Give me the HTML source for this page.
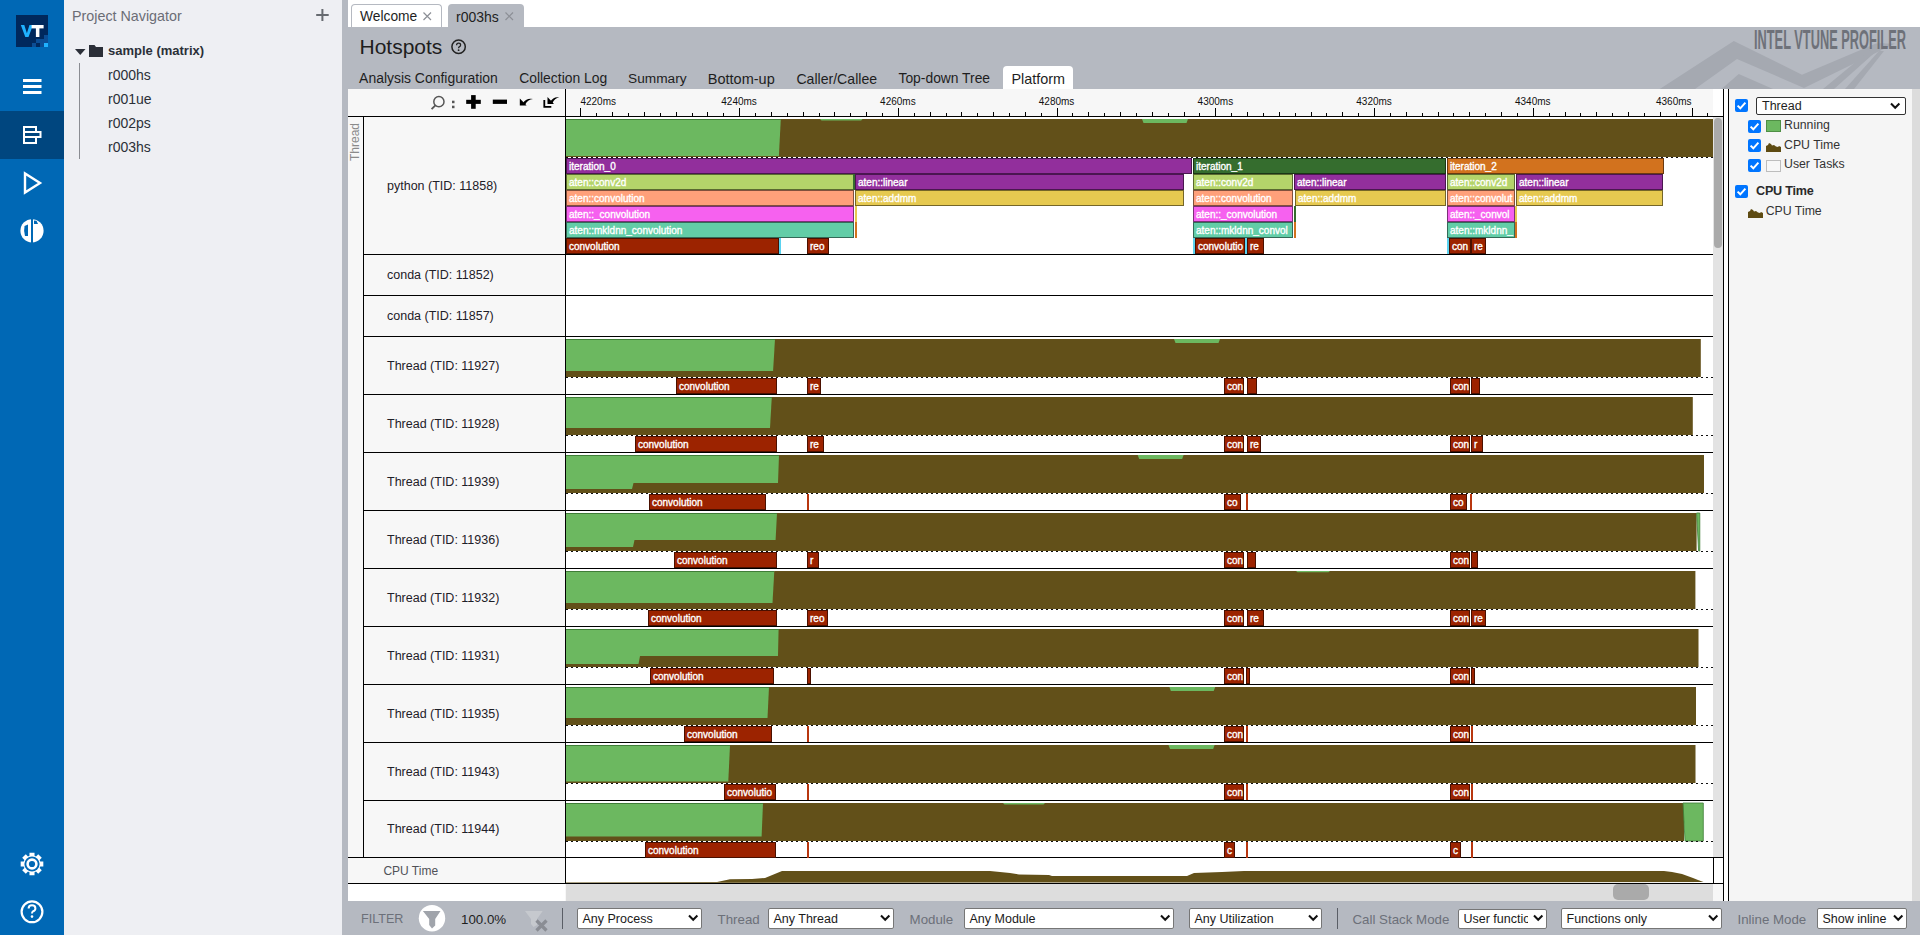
<!DOCTYPE html><html><head><meta charset="utf-8"><style>
html,body{margin:0;padding:0;width:1920px;height:935px;overflow:hidden;background:#fff;font-family:"Liberation Sans", sans-serif;}
.tb{position:absolute;overflow:hidden;box-sizing:border-box;border:1px solid;color:#fff;font-size:10px;line-height:16px;padding-left:2px;white-space:nowrap;-webkit-text-stroke:0.35px #fff;}
.sel{position:absolute;box-sizing:border-box;background:#fff;border:1px solid #767676;border-radius:2px;font-size:12.5px;color:#1a1a1a;white-space:nowrap;overflow:hidden;}
.cb{position:absolute;width:13px;height:13px;border-radius:2px;background:#0075ff;}
</style></head><body>
<div style="position:absolute;left:0px;top:0px;width:64px;height:935px;background:#0068b5"></div>
<div style="position:absolute;left:0px;top:111px;width:64px;height:48px;background:#00467f"></div>
<svg style="position:absolute;left:0;top:0" width="64" height="935"><rect x="16" y="15" width="32" height="32" fill="#00285c"/><polygon points="20.8,25 24.3,25 26.9,33.2 29.5,25 33,25 28.5,37 25.3,37" fill="#1fb2ff"/><rect x="31.6" y="25" width="12" height="3.4" fill="#fff"/><rect x="35.9" y="28" width="3.5" height="9" fill="#fff"/><rect x="44" y="35" width="4" height="8" fill="#0b4d94"/><rect x="36" y="39" width="8" height="4" fill="#0b4d94"/><rect x="32" y="43" width="4" height="4" fill="#0b4d94"/><rect x="40" y="43" width="4" height="4" fill="#0b4d94"/><rect x="44" y="43" width="4" height="4" fill="#1fb2ff"/><rect x="23" y="79" width="18.5" height="3" fill="#fff"/><rect x="23" y="85" width="18.5" height="3" fill="#fff"/><rect x="23" y="91" width="18.5" height="3" fill="#fff"/><g fill="none" stroke="#fff" stroke-width="2"><rect x="24" y="127" width="12" height="5"/><rect x="24" y="132" width="16.5" height="5"/><rect x="24" y="137" width="12" height="6"/></g><polygon points="25,173.5 25,192.5 40,183" fill="none" stroke="#fff" stroke-width="2.4" stroke-linejoin="miter"/><circle cx="32" cy="230.8" r="11.6" fill="#fff"/><rect x="31" y="218" width="2" height="26" fill="#0068b5"/><path d="M24.5,226 Q23.5,231 25,236 L28,236 L28,224.5 Z" fill="#0068b5"/><path d="M34,220.5 L36.5,220.8 L38,224 L34,224 Z" fill="#0068b5"/><polygon points="43.32,861.47 43.32,866.53 40.22,866.54 39.61,868.01 41.79,870.21 38.21,873.79 36.01,871.61 34.54,872.22 34.53,875.32 29.47,875.32 29.46,872.22 27.99,871.61 25.79,873.79 22.21,870.21 24.39,868.01 23.78,866.54 20.68,866.53 20.68,861.47 23.78,861.46 24.39,859.99 22.21,857.79 25.79,854.21 27.99,856.39 29.46,855.78 29.47,852.68 34.53,852.68 34.54,855.78 36.01,856.39 38.21,854.21 41.79,857.79 39.61,859.99 40.22,861.46" fill="#fff"/><circle cx="32" cy="864" r="7.6" fill="#0068b5"/><circle cx="32" cy="864" r="5.7" fill="#fff"/><circle cx="32" cy="864" r="3.1" fill="#0068b5"/><circle cx="32" cy="911.8" r="10.4" fill="none" stroke="#fff" stroke-width="2.2"/><path d="M28.6,908.6 Q28.6,905.3 32,905.3 Q35.4,905.3 35.4,908.4 Q35.4,910.4 33,911.3 Q32,911.8 32,913.6" fill="none" stroke="#fff" stroke-width="2"/><circle cx="32" cy="916.6" r="1.3" fill="#fff"/></svg>
<div style="position:absolute;left:64px;top:0px;width:278px;height:935px;background:#eeeff3"></div>
<div style="position:absolute;left:72px;top:8.86px;font-size:14.3px;line-height:14.3px;height:14.3px;color:#6b6d76;font-weight:400;white-space:nowrap;">Project Navigator</div>
<svg style="position:absolute;left:300px;top:0" width="40" height="40"><rect x="21.4" y="9" width="2" height="12" fill="#666a70"/><rect x="16.2" y="14" width="12.5" height="2" fill="#666a70"/></svg>
<svg style="position:absolute;left:70px;top:40px" width="40" height="20"><polygon points="5,9 15.5,9 10.25,15" fill="#2b2f38"/><path d="M19,5 L24.5,5 L26,7 L33,7 L33,17 L19,17 Z" fill="#2b2f38"/></svg>
<div style="position:absolute;left:108px;top:44.00px;font-size:13px;line-height:13px;height:13px;color:#2b2f38;font-weight:700;white-space:nowrap;">sample (matrix)</div>
<div style="position:absolute;left:108px;top:68.40px;font-size:14px;line-height:14px;height:14px;color:#2b2f38;font-weight:400;white-space:nowrap;">r000hs</div>
<div style="position:absolute;left:108px;top:92.40px;font-size:14px;line-height:14px;height:14px;color:#2b2f38;font-weight:400;white-space:nowrap;">r001ue</div>
<div style="position:absolute;left:108px;top:116.40px;font-size:14px;line-height:14px;height:14px;color:#2b2f38;font-weight:400;white-space:nowrap;">r002ps</div>
<div style="position:absolute;left:108px;top:140.40px;font-size:14px;line-height:14px;height:14px;color:#2b2f38;font-weight:400;white-space:nowrap;">r003hs</div>
<div style="position:absolute;left:79px;top:63px;width:1px;height:96px;background:#8a8c92"></div>
<div style="position:absolute;left:342px;top:0px;width:6px;height:935px;background:#b5b9c1"></div>
<div style="position:absolute;left:348px;top:0px;width:1572px;height:27px;background:#fff"></div>
<div style="position:absolute;left:351px;top:4px;width:91px;height:24px;background:#fff;border:1px solid #b5b9c1;border-bottom:none;border-radius:4px 4px 0 0;box-sizing:border-box"></div>
<div style="position:absolute;left:360px;top:9.76px;font-size:13.8px;line-height:13.8px;height:13.8px;color:#1e1e1e;font-weight:400;white-space:nowrap;">Welcome</div>
<div style="position:absolute;left:448px;top:4px;width:76px;height:23px;background:#b5b9c1;border-radius:4px 4px 0 0"></div>
<div style="position:absolute;left:456px;top:9.60px;font-size:14px;line-height:14px;height:14px;color:#1e1e1e;font-weight:400;white-space:nowrap;">r003hs</div>
<svg style="position:absolute;left:423.2px;top:12px" width="9" height="9"><path d="M0.5,0.5 L8,8 M8,0.5 L0.5,8" stroke="#8c8f96" stroke-width="1.2"/></svg>
<svg style="position:absolute;left:505.4px;top:12px" width="9" height="9"><path d="M0.5,0.5 L8,8 M8,0.5 L0.5,8" stroke="#8c8f96" stroke-width="1.2"/></svg>
<div style="position:absolute;left:348px;top:27px;width:1572px;height:62px;background:#b5b9c1"></div>
<svg style="position:absolute;left:1600px;top:27px" width="320" height="62"><polygon points="59.8,62 133.8,14 202,47.7 276,16.4 295,16.4 204,61 137,32 95,62" fill="#a5a9b1"/><polygon points="121.6,62 138.75,47 173,62" fill="#a5a9b1"/><polygon points="223,62 278,16.4 285,16.4 234,62" fill="#a5a9b1"/><polygon points="245,62 279,24 284,24 254,62" fill="#a5a9b1"/></svg>
<div style="position:absolute;left:1754px;top:25px;height:30px;font-size:27px;line-height:30px;font-weight:700;color:#6e7179;white-space:nowrap;transform:scaleX(0.474);transform-origin:0 0;letter-spacing:0px">INTEL VTUNE PROFILER</div>
<div style="position:absolute;left:359.5px;top:36.20px;font-size:21px;line-height:21px;height:21px;color:#1e1e1e;font-weight:400;white-space:nowrap;">Hotspots</div>
<svg style="position:absolute;left:450px;top:38px" width="18" height="18"><circle cx="8.6" cy="8.7" r="6.7" fill="none" stroke="#222" stroke-width="1.5"/><path d="M6.6,7.2 Q6.6,5.2 8.6,5.2 Q10.6,5.2 10.6,7 Q10.6,8.2 9.2,8.8 Q8.6,9.1 8.6,10.3" fill="none" stroke="#222" stroke-width="1.3"/><circle cx="8.6" cy="12.2" r="0.9" fill="#222"/></svg>
<div style="position:absolute;left:1003px;top:66px;width:70px;height:23px;background:#fff;border-radius:4px 4px 0 0"></div>
<div style="position:absolute;left:359.1px;top:72.04px;font-size:13.95px;line-height:13.95px;height:13.95px;color:#1e1e1e;font-weight:400;white-space:nowrap;">Analysis Configuration</div>
<div style="position:absolute;left:519.2px;top:72.08px;font-size:13.9px;line-height:13.9px;height:13.9px;color:#1e1e1e;font-weight:400;white-space:nowrap;">Collection Log</div>
<div style="position:absolute;left:628.0px;top:72.24px;font-size:13.7px;line-height:13.7px;height:13.7px;color:#1e1e1e;font-weight:400;white-space:nowrap;">Summary</div>
<div style="position:absolute;left:707.8px;top:71.60px;font-size:14.5px;line-height:14.5px;height:14.5px;color:#1e1e1e;font-weight:400;white-space:nowrap;">Bottom-up</div>
<div style="position:absolute;left:796.4px;top:71.92px;font-size:14.1px;line-height:14.1px;height:14.1px;color:#1e1e1e;font-weight:400;white-space:nowrap;">Caller/Callee</div>
<div style="position:absolute;left:898.5px;top:72.12px;font-size:13.85px;line-height:13.85px;height:13.85px;color:#1e1e1e;font-weight:400;white-space:nowrap;">Top-down Tree</div>
<div style="position:absolute;left:1011.5px;top:71.68px;font-size:14.4px;line-height:14.4px;height:14.4px;color:#1e1e1e;font-weight:400;white-space:nowrap;">Platform</div>
<div style="position:absolute;left:348px;top:89px;width:1375px;height:812px;background:#f7f7f7"></div>
<div style="position:absolute;left:566px;top:117px;width:1147px;height:740px;background:#fff"></div>
<div style="position:absolute;left:566px;top:857px;width:1147px;height:26px;background:#fff"></div>
<div style="position:absolute;left:348px;top:884px;width:217px;height:17px;background:#fff"></div>
<div style="position:absolute;left:566px;top:884px;width:1147px;height:17px;background:#dddddd"></div>
<div style="position:absolute;left:1613px;top:884px;width:36px;height:16px;background:#aaaaaa;border-radius:5px"></div>
<div style="position:absolute;left:1713px;top:117px;width:10px;height:740px;background:#e3e3e3"></div>
<div style="position:absolute;left:1714px;top:118px;width:8px;height:130px;background:#aaaaaa;border-radius:4px"></div>
<div style="position:absolute;left:1713px;top:89px;width:10px;height:27px;background:#fff"></div>
<div style="position:absolute;left:1723px;top:89px;width:1px;height:812px;background:#000"></div>
<div style="position:absolute;left:1724px;top:89px;width:4px;height:812px;background:#fff"></div>
<div style="position:absolute;left:1728px;top:89px;width:1px;height:812px;background:#000"></div>
<div style="position:absolute;left:1729px;top:89px;width:183px;height:812px;background:#f5f5f5"></div>
<div style="position:absolute;left:1912px;top:89px;width:8px;height:812px;background:#dcdcdc"></div>
<svg style="position:absolute;left:0;top:0" width="1920" height="935" shape-rendering="crispEdges"><rect x="348" y="116" width="1375" height="1" fill="#000" /><rect x="565" y="89" width="1" height="795" fill="#000" /><rect x="580" y="108" width="1" height="8" fill="#000" /><rect x="596" y="113" width="1" height="3" fill="#000" /><rect x="612" y="112" width="1" height="4" fill="#000" /><rect x="628" y="113" width="1" height="3" fill="#000" /><rect x="644" y="112" width="1" height="4" fill="#000" /><rect x="660" y="113" width="1" height="3" fill="#000" /><rect x="676" y="112" width="1" height="4" fill="#000" /><rect x="692" y="113" width="1" height="3" fill="#000" /><rect x="707" y="112" width="1" height="4" fill="#000" /><rect x="723" y="113" width="1" height="3" fill="#000" /><rect x="739" y="108" width="1" height="8" fill="#000" /><rect x="755" y="113" width="1" height="3" fill="#000" /><rect x="771" y="112" width="1" height="4" fill="#000" /><rect x="787" y="113" width="1" height="3" fill="#000" /><rect x="803" y="112" width="1" height="4" fill="#000" /><rect x="819" y="113" width="1" height="3" fill="#000" /><rect x="834" y="112" width="1" height="4" fill="#000" /><rect x="850" y="113" width="1" height="3" fill="#000" /><rect x="866" y="112" width="1" height="4" fill="#000" /><rect x="882" y="113" width="1" height="3" fill="#000" /><rect x="898" y="108" width="1" height="8" fill="#000" /><rect x="914" y="113" width="1" height="3" fill="#000" /><rect x="930" y="112" width="1" height="4" fill="#000" /><rect x="946" y="113" width="1" height="3" fill="#000" /><rect x="961" y="112" width="1" height="4" fill="#000" /><rect x="977" y="113" width="1" height="3" fill="#000" /><rect x="993" y="112" width="1" height="4" fill="#000" /><rect x="1009" y="113" width="1" height="3" fill="#000" /><rect x="1025" y="112" width="1" height="4" fill="#000" /><rect x="1041" y="113" width="1" height="3" fill="#000" /><rect x="1057" y="108" width="1" height="8" fill="#000" /><rect x="1072" y="113" width="1" height="3" fill="#000" /><rect x="1088" y="112" width="1" height="4" fill="#000" /><rect x="1104" y="113" width="1" height="3" fill="#000" /><rect x="1120" y="112" width="1" height="4" fill="#000" /><rect x="1136" y="113" width="1" height="3" fill="#000" /><rect x="1152" y="112" width="1" height="4" fill="#000" /><rect x="1168" y="113" width="1" height="3" fill="#000" /><rect x="1184" y="112" width="1" height="4" fill="#000" /><rect x="1199" y="113" width="1" height="3" fill="#000" /><rect x="1215" y="108" width="1" height="8" fill="#000" /><rect x="1231" y="113" width="1" height="3" fill="#000" /><rect x="1247" y="112" width="1" height="4" fill="#000" /><rect x="1263" y="113" width="1" height="3" fill="#000" /><rect x="1279" y="112" width="1" height="4" fill="#000" /><rect x="1295" y="113" width="1" height="3" fill="#000" /><rect x="1311" y="112" width="1" height="4" fill="#000" /><rect x="1326" y="113" width="1" height="3" fill="#000" /><rect x="1342" y="112" width="1" height="4" fill="#000" /><rect x="1358" y="113" width="1" height="3" fill="#000" /><rect x="1374" y="108" width="1" height="8" fill="#000" /><rect x="1390" y="113" width="1" height="3" fill="#000" /><rect x="1406" y="112" width="1" height="4" fill="#000" /><rect x="1422" y="113" width="1" height="3" fill="#000" /><rect x="1438" y="112" width="1" height="4" fill="#000" /><rect x="1453" y="113" width="1" height="3" fill="#000" /><rect x="1469" y="112" width="1" height="4" fill="#000" /><rect x="1485" y="113" width="1" height="3" fill="#000" /><rect x="1501" y="112" width="1" height="4" fill="#000" /><rect x="1517" y="113" width="1" height="3" fill="#000" /><rect x="1533" y="108" width="1" height="8" fill="#000" /><rect x="1549" y="113" width="1" height="3" fill="#000" /><rect x="1565" y="112" width="1" height="4" fill="#000" /><rect x="1580" y="113" width="1" height="3" fill="#000" /><rect x="1596" y="112" width="1" height="4" fill="#000" /><rect x="1612" y="113" width="1" height="3" fill="#000" /><rect x="1628" y="112" width="1" height="4" fill="#000" /><rect x="1644" y="113" width="1" height="3" fill="#000" /><rect x="1660" y="112" width="1" height="4" fill="#000" /><rect x="1676" y="113" width="1" height="3" fill="#000" /><rect x="1692" y="108" width="1" height="8" fill="#000" /><rect x="1707" y="113" width="1" height="3" fill="#000" /></svg>
<svg style="position:absolute;left:425px;top:90px;z-index:2" width="140" height="25">
<circle cx="13.9" cy="11.7" r="5.1" fill="none" stroke="#555" stroke-width="1.5"/>
<path d="M10.4,15.3 L6.6,19.2" stroke="#555" stroke-width="1.8"/>
<rect x="27" y="10.7" width="2.5" height="2.5" fill="#555"/><rect x="27" y="15.7" width="2.5" height="2.5" fill="#555"/>
<rect x="46.1" y="5.1" width="4.6" height="13.7" fill="#000"/><rect x="41.2" y="9.8" width="14.6" height="4.1" fill="#000"/>
<rect x="67.8" y="9.6" width="14.2" height="4.3" fill="#000"/>
<path d="M94.8,8.4 L94.8,15.6 L101.6,15.6 Z" fill="#000"/>
<path d="M97.5,13.5 Q101,7.8 108,9 Q102.5,9.5 100,15 Z" fill="#000"/>
<path d="M119.3,10 L119.3,16.9 L126.3,16.9" fill="none" stroke="#000" stroke-width="1.8"/>
<path d="M122.5,7 L122.5,14 L129,14 Z" fill="#000"/>
<path d="M125,12 Q128.5,6.3 134.3,7.5 Q129.5,8 127.3,13.5 Z" fill="#000"/>
</svg>
<div style="position:absolute;left:580.4px;top:96.90px;font-size:10px;line-height:10px;height:10px;color:#111;font-weight:400;white-space:nowrap;">4220ms</div>
<div style="position:absolute;left:721.3px;top:96.90px;font-size:10px;line-height:10px;height:10px;color:#111;font-weight:400;white-space:nowrap;">4240ms</div>
<div style="position:absolute;left:880.1px;top:96.90px;font-size:10px;line-height:10px;height:10px;color:#111;font-weight:400;white-space:nowrap;">4260ms</div>
<div style="position:absolute;left:1038.8px;top:96.90px;font-size:10px;line-height:10px;height:10px;color:#111;font-weight:400;white-space:nowrap;">4280ms</div>
<div style="position:absolute;left:1197.6px;top:96.90px;font-size:10px;line-height:10px;height:10px;color:#111;font-weight:400;white-space:nowrap;">4300ms</div>
<div style="position:absolute;left:1356.3px;top:96.90px;font-size:10px;line-height:10px;height:10px;color:#111;font-weight:400;white-space:nowrap;">4320ms</div>
<div style="position:absolute;left:1515.0px;top:96.90px;font-size:10px;line-height:10px;height:10px;color:#111;font-weight:400;white-space:nowrap;">4340ms</div>
<div style="position:absolute;left:1656.0px;top:96.90px;font-size:10px;line-height:10px;height:10px;color:#111;font-weight:400;white-space:nowrap;">4360ms</div>
<svg style="position:absolute;left:0;top:0" width="1920" height="935" shape-rendering="crispEdges"><rect x="363" y="116" width="1" height="741" fill="#000" /><rect x="363" y="254" width="1350" height="1" fill="#000" /><rect x="363" y="295" width="1350" height="1" fill="#000" /><rect x="363" y="336" width="1350" height="1" fill="#000" /><rect x="363" y="394" width="1350" height="1" fill="#000" /><rect x="363" y="452" width="1350" height="1" fill="#000" /><rect x="363" y="510" width="1350" height="1" fill="#000" /><rect x="363" y="568" width="1350" height="1" fill="#000" /><rect x="363" y="626" width="1350" height="1" fill="#000" /><rect x="363" y="684" width="1350" height="1" fill="#000" /><rect x="363" y="742" width="1350" height="1" fill="#000" /><rect x="363" y="800" width="1350" height="1" fill="#000" /><rect x="348" y="857" width="1365" height="1" fill="#000" /><rect x="348" y="883" width="1375" height="1" fill="#000" /><rect x="1713" y="857" width="10" height="26" fill="#fff" stroke="#000" stroke-width="1"/><polygon points="566,119 1713,119 1713,157 566,157" fill="#625019" shape-rendering="geometricPrecision"/><polygon points="566,119 780.8,119 778.9,156 566,156" fill="#6cb860" shape-rendering="geometricPrecision"/><rect x="566" y="119" width="215" height="1" fill="#3f7d37" /><polygon points="820,119 862.6,119 861.1,120.6 821.5,120.6" fill="#6cb860" shape-rendering="geometricPrecision"/><polygon points="1142,119 1188,119 1186.5,123 1143.5,123" fill="#6cb860" shape-rendering="geometricPrecision"/><line x1="566" y1="157.5" x2="1713" y2="157.5" stroke="#111" stroke-width="1" stroke-dasharray="2,3"/><polygon points="566,339 1700.8,339 1700.8,377 566,377" fill="#625019" shape-rendering="geometricPrecision"/><polygon points="566,339 775,339 773.1,371 566,371" fill="#6cb860" shape-rendering="geometricPrecision"/><rect x="566" y="339" width="209" height="1" fill="#3f7d37" /><polygon points="1174,339 1220,339 1218.5,343 1175.5,343" fill="#6cb860" shape-rendering="geometricPrecision"/><line x1="566" y1="377.5" x2="1713" y2="377.5" stroke="#111" stroke-width="1" stroke-dasharray="2,3"/><polygon points="566,397 1692.8,397 1692.8,435 566,435" fill="#625019" shape-rendering="geometricPrecision"/><polygon points="566,397 771.8,397 770,428 566,428" fill="#6cb860" shape-rendering="geometricPrecision"/><rect x="566" y="397" width="206" height="1" fill="#3f7d37" /><line x1="566" y1="435.5" x2="1713" y2="435.5" stroke="#111" stroke-width="1" stroke-dasharray="2,3"/><polygon points="566,455 1704,455 1704,493 566,493" fill="#625019" shape-rendering="geometricPrecision"/><polygon points="566,455 779,455 778,483 633.5,483 632,489 566,489" fill="#6cb860" shape-rendering="geometricPrecision"/><rect x="566" y="455" width="213" height="1" fill="#3f7d37" /><polygon points="1137.7,455 1183.6,455 1182.1,459 1139.2,459" fill="#6cb860" shape-rendering="geometricPrecision"/><line x1="566" y1="493.5" x2="1713" y2="493.5" stroke="#111" stroke-width="1" stroke-dasharray="2,3"/><polygon points="566,513 1696.6,513 1696.6,551 566,551" fill="#625019" shape-rendering="geometricPrecision"/><polygon points="566,513 777,513 775.6,540 634.5,540 633,547 566,547" fill="#6cb860" shape-rendering="geometricPrecision"/><rect x="566" y="513" width="211" height="1" fill="#3f7d37" /><polygon points="1696.6,513 1699.8,513 1699.8,551 1698.6,551" fill="#6cb860" stroke="#3f7d37" stroke-width="0.8" shape-rendering="geometricPrecision"/><line x1="566" y1="551.5" x2="1713" y2="551.5" stroke="#111" stroke-width="1" stroke-dasharray="2,3"/><polygon points="566,571 1695.4,571 1695.4,609 566,609" fill="#625019" shape-rendering="geometricPrecision"/><polygon points="566,571 774.3,571 772.5,603 566,603" fill="#6cb860" shape-rendering="geometricPrecision"/><rect x="566" y="571" width="208" height="1" fill="#3f7d37" /><polygon points="1296,571 1330,571 1328.5,572.2 1297.5,572.2" fill="#6cb860" shape-rendering="geometricPrecision"/><line x1="566" y1="609.5" x2="1713" y2="609.5" stroke="#111" stroke-width="1" stroke-dasharray="2,3"/><polygon points="566,629 1698.5,629 1698.5,667 566,667" fill="#625019" shape-rendering="geometricPrecision"/><polygon points="566,629 778.6,629 778,656 640.0,656 638.5,664 566,664" fill="#6cb860" shape-rendering="geometricPrecision"/><rect x="566" y="629" width="213" height="1" fill="#3f7d37" /><line x1="566" y1="667.5" x2="1713" y2="667.5" stroke="#111" stroke-width="1" stroke-dasharray="2,3"/><polygon points="566,687 1696,687 1696,725 566,725" fill="#625019" shape-rendering="geometricPrecision"/><polygon points="566,687 769,687 767.5,718 566,718" fill="#6cb860" shape-rendering="geometricPrecision"/><rect x="566" y="687" width="203" height="1" fill="#3f7d37" /><polygon points="1169.4,687 1215.2,687 1213.7,691 1170.9,691" fill="#6cb860" shape-rendering="geometricPrecision"/><line x1="566" y1="725.5" x2="1713" y2="725.5" stroke="#111" stroke-width="1" stroke-dasharray="2,3"/><polygon points="566,745 1695.5,745 1695.5,783 566,783" fill="#625019" shape-rendering="geometricPrecision"/><polygon points="566,745 730,745 728.3,781.5 566,781.5" fill="#6cb860" shape-rendering="geometricPrecision"/><rect x="566" y="745" width="164" height="1" fill="#3f7d37" /><polygon points="1168.5,745 1214.6,745 1213.1,749 1170.0,749" fill="#6cb860" shape-rendering="geometricPrecision"/><line x1="566" y1="783.5" x2="1713" y2="783.5" stroke="#111" stroke-width="1" stroke-dasharray="2,3"/><polygon points="566,803 1684,803 1684,841 566,841" fill="#625019" shape-rendering="geometricPrecision"/><polygon points="566,803 763,803 761.6,836.5 566,836.5" fill="#6cb860" shape-rendering="geometricPrecision"/><rect x="566" y="803" width="197" height="1" fill="#3f7d37" /><polygon points="1003,803 1045,803 1043.5,804.5 1004.5,804.5" fill="#6cb860" shape-rendering="geometricPrecision"/><polygon points="1683,803 1703.3,803 1703.3,841 1685,841" fill="#6cb860" stroke="#3f7d37" stroke-width="0.8" shape-rendering="geometricPrecision"/><line x1="566" y1="841.5" x2="1713" y2="841.5" stroke="#111" stroke-width="1" stroke-dasharray="2,3"/><polygon points="566,882.5 717,882 730,879.3 752,879 765,878 782,871.1 990,871.1 1010,873 1019,874.5 1049,875 1052,876 1187,876 1194,873 1222,872 1244,871 1664,871 1672,872 1682,874 1693,878 1698,880 1703.5,882 1713,882 566,883" fill="#625019" shape-rendering="geometricPrecision"/></svg>
<div class="tb" style="left:566px;top:158px;width:626px;height:16px;background:#922f9c;border-color:#4a1650">iteration_0</div>
<div class="tb" style="left:1193px;top:158px;width:253px;height:16px;background:#356d2e;border-color:#1a3616">iteration_1</div>
<div class="tb" style="left:1447px;top:158px;width:217px;height:16px;background:#d2721e;border-color:#6a3a10">iteration_2</div>
<div class="tb" style="left:566px;top:174px;width:288px;height:16px;background:#b4d46a;border-color:#5a6a30">aten::conv2d</div>
<div style="position:absolute;left:853px;top:174px;width:1.5px;height:16px;background:#356d2e"></div>
<div class="tb" style="left:855px;top:174px;width:329px;height:16px;background:#922f9c;border-color:#4a1650">aten::linear</div>
<div class="tb" style="left:1193px;top:174px;width:100px;height:16px;background:#b4d46a;border-color:#5a6a30">aten::conv2d</div>
<div class="tb" style="left:1294px;top:174px;width:152px;height:16px;background:#922f9c;border-color:#4a1650">aten::linear</div>
<div class="tb" style="left:1447px;top:174px;width:68px;height:16px;background:#b4d46a;border-color:#5a6a30">aten::conv2d</div>
<div class="tb" style="left:1516px;top:174px;width:147px;height:16px;background:#922f9c;border-color:#4a1650">aten::linear</div>
<div class="tb" style="left:566px;top:190px;width:288px;height:16px;background:#fea07a;border-color:#80503c">aten::convolution</div>
<div class="tb" style="left:855px;top:190px;width:329px;height:16px;background:#e6c950;border-color:#756628">aten::addmm</div>
<div class="tb" style="left:1193px;top:190px;width:100px;height:16px;background:#fea07a;border-color:#80503c">aten::convolution</div>
<div class="tb" style="left:1295px;top:190px;width:151px;height:16px;background:#e6c950;border-color:#756628">aten::addmm</div>
<div class="tb" style="left:1447px;top:190px;width:68px;height:16px;background:#fea07a;border-color:#80503c">aten::convolut</div>
<div class="tb" style="left:1516px;top:190px;width:147px;height:16px;background:#e6c950;border-color:#756628">aten::addmm</div>
<div class="tb" style="left:566px;top:206px;width:288px;height:16px;background:#f661ef;border-color:#7a3076">aten::_convolution</div>
<div style="position:absolute;left:855px;top:206px;width:1.5px;height:16px;background:#e6c950"></div>
<div class="tb" style="left:1193px;top:206px;width:100px;height:16px;background:#f661ef;border-color:#7a3076">aten::_convolution</div>
<div style="position:absolute;left:1294px;top:206px;width:2px;height:16px;background:#356d2e"></div>
<div class="tb" style="left:1447px;top:206px;width:68px;height:16px;background:#f661ef;border-color:#7a3076">aten::_convol</div>
<div style="position:absolute;left:1515px;top:206px;width:1.5px;height:16px;background:#e6c950"></div>
<div class="tb" style="left:566px;top:222px;width:288px;height:16px;background:#62cda7;border-color:#346a58">aten::mkldnn_convolution</div>
<div style="position:absolute;left:855px;top:222px;width:2px;height:16px;background:#d2721e"></div>
<div class="tb" style="left:1193px;top:222px;width:100px;height:16px;background:#62cda7;border-color:#346a58">aten::mkldnn_convol</div>
<div style="position:absolute;left:1294px;top:222px;width:1.5px;height:16px;background:#d2721e"></div>
<div class="tb" style="left:1447px;top:222px;width:68px;height:16px;background:#62cda7;border-color:#346a58">aten::mkldnn_</div>
<div style="position:absolute;left:1515px;top:222px;width:2px;height:16px;background:#d2721e"></div>
<div class="tb" style="left:566px;top:238px;width:213px;height:16px;background:#9c2300;border-color:#4a1000">convolution</div>
<div style="position:absolute;left:779px;top:238px;width:2px;height:16px;background:#5ad2f0"></div>
<div class="tb" style="left:807px;top:238px;width:22px;height:16px;background:#9c2300;border-color:#4a1000">reo</div>
<div style="position:absolute;left:1193px;top:238px;width:1.5px;height:16px;background:#5ad2f0"></div>
<div class="tb" style="left:1195px;top:238px;width:50px;height:16px;background:#9c2300;border-color:#4a1000">convolutio</div>
<div style="position:absolute;left:1245px;top:238px;width:1.5px;height:16px;background:#5ad2f0"></div>
<div class="tb" style="left:1247px;top:238px;width:17px;height:16px;background:#9c2300;border-color:#4a1000">re</div>
<div style="position:absolute;left:1447px;top:238px;width:1.5px;height:16px;background:#5ad2f0"></div>
<div class="tb" style="left:1449px;top:238px;width:22px;height:16px;background:#9c2300;border-color:#4a1000">con</div>
<div class="tb" style="left:1471px;top:238px;width:15px;height:16px;background:#9c2300;border-color:#4a1000">re</div>
<div class="tb" style="left:676px;top:378px;width:101px;height:16px;background:#9c2300;border-color:#4a1000">convolution</div>
<div class="tb" style="left:807px;top:378px;width:14px;height:16px;background:#9c2300;border-color:#4a1000">re</div>
<div class="tb" style="left:1224px;top:378px;width:20px;height:16px;background:#9c2300;border-color:#4a1000">con</div>
<div class="tb" style="left:1247px;top:378px;width:10px;height:16px;background:#9c2300;border-color:#4a1000"></div>
<div class="tb" style="left:1450px;top:378px;width:20px;height:16px;background:#9c2300;border-color:#4a1000">con</div>
<div class="tb" style="left:1471px;top:378px;width:9px;height:16px;background:#9c2300;border-color:#4a1000"></div>
<div class="tb" style="left:635px;top:436px;width:142px;height:16px;background:#9c2300;border-color:#4a1000">convolution</div>
<div class="tb" style="left:807px;top:436px;width:17px;height:16px;background:#9c2300;border-color:#4a1000">re</div>
<div class="tb" style="left:1224px;top:436px;width:20px;height:16px;background:#9c2300;border-color:#4a1000">con</div>
<div class="tb" style="left:1247px;top:436px;width:14px;height:16px;background:#9c2300;border-color:#4a1000">re</div>
<div class="tb" style="left:1450px;top:436px;width:20px;height:16px;background:#9c2300;border-color:#4a1000">con</div>
<div class="tb" style="left:1471px;top:436px;width:12px;height:16px;background:#9c2300;border-color:#4a1000">r</div>
<div class="tb" style="left:649px;top:494px;width:117px;height:16px;background:#9c2300;border-color:#4a1000">convolution</div>
<div style="position:absolute;left:807px;top:494px;width:1.5px;height:16px;background:#b8360f"></div>
<div class="tb" style="left:1224px;top:494px;width:17px;height:16px;background:#9c2300;border-color:#4a1000">co</div>
<div style="position:absolute;left:1246px;top:494px;width:1.5px;height:16px;background:#b8360f"></div>
<div class="tb" style="left:1450px;top:494px;width:17px;height:16px;background:#9c2300;border-color:#4a1000">co</div>
<div style="position:absolute;left:1470px;top:494px;width:1.5px;height:16px;background:#b8360f"></div>
<div class="tb" style="left:674px;top:552px;width:103px;height:16px;background:#9c2300;border-color:#4a1000">convolution</div>
<div class="tb" style="left:807px;top:552px;width:12px;height:16px;background:#9c2300;border-color:#4a1000">r</div>
<div class="tb" style="left:1224px;top:552px;width:20px;height:16px;background:#9c2300;border-color:#4a1000">con</div>
<div class="tb" style="left:1247px;top:552px;width:9px;height:16px;background:#9c2300;border-color:#4a1000"></div>
<div class="tb" style="left:1450px;top:552px;width:20px;height:16px;background:#9c2300;border-color:#4a1000">con</div>
<div class="tb" style="left:1471px;top:552px;width:7px;height:16px;background:#9c2300;border-color:#4a1000"></div>
<div class="tb" style="left:648px;top:610px;width:129px;height:16px;background:#9c2300;border-color:#4a1000">convolution</div>
<div class="tb" style="left:807px;top:610px;width:21px;height:16px;background:#9c2300;border-color:#4a1000">reo</div>
<div class="tb" style="left:1224px;top:610px;width:20px;height:16px;background:#9c2300;border-color:#4a1000">con</div>
<div class="tb" style="left:1247px;top:610px;width:17px;height:16px;background:#9c2300;border-color:#4a1000">re</div>
<div class="tb" style="left:1450px;top:610px;width:20px;height:16px;background:#9c2300;border-color:#4a1000">con</div>
<div class="tb" style="left:1471px;top:610px;width:15px;height:16px;background:#9c2300;border-color:#4a1000">re</div>
<div class="tb" style="left:650px;top:668px;width:124px;height:16px;background:#9c2300;border-color:#4a1000">convolution</div>
<div class="tb" style="left:807px;top:668px;width:3px;height:16px;background:#9c2300;border-color:#4a1000"></div>
<div class="tb" style="left:1224px;top:668px;width:20px;height:16px;background:#9c2300;border-color:#4a1000">con</div>
<div class="tb" style="left:1246px;top:668px;width:4px;height:16px;background:#9c2300;border-color:#4a1000"></div>
<div class="tb" style="left:1450px;top:668px;width:20px;height:16px;background:#9c2300;border-color:#4a1000">con</div>
<div class="tb" style="left:1471px;top:668px;width:3px;height:16px;background:#9c2300;border-color:#4a1000"></div>
<div class="tb" style="left:684px;top:726px;width:88px;height:16px;background:#9c2300;border-color:#4a1000">convolution</div>
<div style="position:absolute;left:807px;top:726px;width:1.5px;height:16px;background:#b8360f"></div>
<div class="tb" style="left:1224px;top:726px;width:20px;height:16px;background:#9c2300;border-color:#4a1000">con</div>
<div style="position:absolute;left:1246px;top:726px;width:1.5px;height:16px;background:#b8360f"></div>
<div class="tb" style="left:1450px;top:726px;width:20px;height:16px;background:#9c2300;border-color:#4a1000">con</div>
<div style="position:absolute;left:1471px;top:726px;width:1.5px;height:16px;background:#b8360f"></div>
<div class="tb" style="left:724px;top:784px;width:52px;height:16px;background:#9c2300;border-color:#4a1000">convolutio</div>
<div style="position:absolute;left:807px;top:784px;width:1.5px;height:16px;background:#b8360f"></div>
<div class="tb" style="left:1224px;top:784px;width:20px;height:16px;background:#9c2300;border-color:#4a1000">con</div>
<div style="position:absolute;left:1246px;top:784px;width:1.5px;height:16px;background:#b8360f"></div>
<div class="tb" style="left:1450px;top:784px;width:20px;height:16px;background:#9c2300;border-color:#4a1000">con</div>
<div style="position:absolute;left:1471px;top:784px;width:1.5px;height:16px;background:#b8360f"></div>
<div class="tb" style="left:645px;top:842px;width:131px;height:16px;background:#9c2300;border-color:#4a1000">convolution</div>
<div style="position:absolute;left:807px;top:842px;width:1.5px;height:16px;background:#b8360f"></div>
<div class="tb" style="left:1224px;top:842px;width:11px;height:16px;background:#9c2300;border-color:#4a1000">c</div>
<div style="position:absolute;left:1246px;top:842px;width:1.5px;height:16px;background:#b8360f"></div>
<div class="tb" style="left:1450px;top:842px;width:11px;height:16px;background:#9c2300;border-color:#4a1000">c</div>
<div style="position:absolute;left:1471px;top:842px;width:1.5px;height:16px;background:#b8360f"></div>
<div style="position:absolute;left:349px;top:-0.80px;font-size:1px;line-height:1px;height:1px;color:#2b2d33;font-weight:400;white-space:nowrap;"></div>
<div style="position:absolute;left:361px;top:122px;width:39px;height:12px;font-size:12px;line-height:12px;color:#8a8a8a;white-space:nowrap;transform:rotate(-90deg);transform-origin:0 0;top:161px;left:348.5px">Thread</div>
<div style="position:absolute;left:387px;top:179.80px;font-size:12.5px;line-height:12.5px;height:12.5px;color:#1e2028;font-weight:400;white-space:nowrap;">python (TID: 11858)</div>
<div style="position:absolute;left:387px;top:269.30px;font-size:12.5px;line-height:12.5px;height:12.5px;color:#1e2028;font-weight:400;white-space:nowrap;">conda (TID: 11852)</div>
<div style="position:absolute;left:387px;top:310.30px;font-size:12.5px;line-height:12.5px;height:12.5px;color:#1e2028;font-weight:400;white-space:nowrap;">conda (TID: 11857)</div>
<div style="position:absolute;left:387px;top:359.80px;font-size:12.5px;line-height:12.5px;height:12.5px;color:#1e2028;font-weight:400;white-space:nowrap;">Thread (TID: 11927)</div>
<div style="position:absolute;left:387px;top:417.80px;font-size:12.5px;line-height:12.5px;height:12.5px;color:#1e2028;font-weight:400;white-space:nowrap;">Thread (TID: 11928)</div>
<div style="position:absolute;left:387px;top:475.80px;font-size:12.5px;line-height:12.5px;height:12.5px;color:#1e2028;font-weight:400;white-space:nowrap;">Thread (TID: 11939)</div>
<div style="position:absolute;left:387px;top:533.80px;font-size:12.5px;line-height:12.5px;height:12.5px;color:#1e2028;font-weight:400;white-space:nowrap;">Thread (TID: 11936)</div>
<div style="position:absolute;left:387px;top:591.80px;font-size:12.5px;line-height:12.5px;height:12.5px;color:#1e2028;font-weight:400;white-space:nowrap;">Thread (TID: 11932)</div>
<div style="position:absolute;left:387px;top:649.80px;font-size:12.5px;line-height:12.5px;height:12.5px;color:#1e2028;font-weight:400;white-space:nowrap;">Thread (TID: 11931)</div>
<div style="position:absolute;left:387px;top:707.80px;font-size:12.5px;line-height:12.5px;height:12.5px;color:#1e2028;font-weight:400;white-space:nowrap;">Thread (TID: 11935)</div>
<div style="position:absolute;left:387px;top:765.80px;font-size:12.5px;line-height:12.5px;height:12.5px;color:#1e2028;font-weight:400;white-space:nowrap;">Thread (TID: 11943)</div>
<div style="position:absolute;left:387px;top:823.30px;font-size:12.5px;line-height:12.5px;height:12.5px;color:#1e2028;font-weight:400;white-space:nowrap;">Thread (TID: 11944)</div>
<div style="position:absolute;left:383.4px;top:865.40px;font-size:12px;line-height:12px;height:12px;color:#505257;font-weight:400;white-space:nowrap;">CPU Time</div>
<div class="cb" style="left:1735px;top:99px"><svg width="13" height="13" style="position:absolute;left:0;top:0"><path d="M2.6,6.6 L5.3,9.3 L10.4,3.6" fill="none" stroke="#fff" stroke-width="2"/></svg></div>
<div class="sel" style="left:1756px;top:97px;width:150px;height:18px;border-color:#333"></div>
<div style="position:absolute;left:1762px;top:99.80px;font-size:12.5px;line-height:12.5px;height:12.5px;color:#1e1e1e;font-weight:400;white-space:nowrap;">Thread</div>
<svg style="position:absolute;left:1890px;top:102px" width="11" height="8"><path d="M1,1.5 L5.2,5.8 L9.4,1.5" fill="none" stroke="#111" stroke-width="2"/></svg>
<div class="cb" style="left:1748px;top:120px"><svg width="13" height="13" style="position:absolute;left:0;top:0"><path d="M2.6,6.6 L5.3,9.3 L10.4,3.6" fill="none" stroke="#fff" stroke-width="2"/></svg></div>
<div style="position:absolute;left:1766px;top:120px;width:15px;height:12px;background:#6cb860;border:1px solid #4f8f45;box-sizing:border-box"></div>
<div style="position:absolute;left:1784px;top:118.76px;font-size:12.3px;line-height:12.3px;height:12.3px;color:#333;font-weight:400;white-space:nowrap;">Running</div>
<div class="cb" style="left:1748px;top:139px"><svg width="13" height="13" style="position:absolute;left:0;top:0"><path d="M2.6,6.6 L5.3,9.3 L10.4,3.6" fill="none" stroke="#fff" stroke-width="2"/></svg></div>
<svg style="position:absolute;left:1766px;top:142px" width="15" height="10"><path d="M0,10 L0,4 L2,3 L3,1 L5,2 L6,3.5 L8,3 L10,4.5 L12,5 L13,4 L15,5 L15,10 Z" fill="#5e4b12"/></svg>
<div style="position:absolute;left:1784px;top:138.76px;font-size:12.3px;line-height:12.3px;height:12.3px;color:#333;font-weight:400;white-space:nowrap;">CPU Time</div>
<div class="cb" style="left:1748px;top:159px"><svg width="13" height="13" style="position:absolute;left:0;top:0"><path d="M2.6,6.6 L5.3,9.3 L10.4,3.6" fill="none" stroke="#fff" stroke-width="2"/></svg></div>
<div style="position:absolute;left:1766px;top:160px;width:15px;height:12px;background:#f7f7f7;border:1px solid #bdbdbd;box-sizing:border-box"></div>
<div style="position:absolute;left:1784px;top:158.36px;font-size:12.3px;line-height:12.3px;height:12.3px;color:#333;font-weight:400;white-space:nowrap;">User Tasks</div>
<div class="cb" style="left:1735px;top:185px"><svg width="13" height="13" style="position:absolute;left:0;top:0"><path d="M2.6,6.6 L5.3,9.3 L10.4,3.6" fill="none" stroke="#fff" stroke-width="2"/></svg></div>
<div style="position:absolute;left:1756px;top:184.52px;font-size:12.6px;line-height:12.6px;height:12.6px;color:#2a2a2a;font-weight:700;white-space:nowrap;letter-spacing:-0.2px">CPU Time</div>
<svg style="position:absolute;left:1748px;top:208px" width="15" height="10"><path d="M0,10 L0,4 L2,3 L3,1 L5,2 L6,3.5 L8,3 L10,4.5 L12,5 L13,4 L15,5 L15,10 Z" fill="#5e4b12"/></svg>
<div style="position:absolute;left:1765.7px;top:204.76px;font-size:12.3px;line-height:12.3px;height:12.3px;color:#333;font-weight:400;white-space:nowrap;">CPU Time</div>
<div style="position:absolute;left:348px;top:901px;width:1572px;height:34px;background:#b5b9c1"></div>
<div style="position:absolute;left:361px;top:913.32px;font-size:12.6px;line-height:12.6px;height:12.6px;color:#6c7079;font-weight:400;white-space:nowrap;">FILTER</div>
<svg style="position:absolute;left:418px;top:904px" width="28" height="28"><circle cx="14" cy="14.2" r="13.2" fill="#fff"/><path d="M4.9,7 L22.5,7 L17.2,15 L17.2,21.5 L14,24.5 L11.2,21 L11.2,15 Z" fill="#a0a4ab"/></svg>
<div style="position:absolute;left:461px;top:912.76px;font-size:13.3px;line-height:13.3px;height:13.3px;color:#1e1e1e;font-weight:400;white-space:nowrap;">100.0%</div>
<svg style="position:absolute;left:524px;top:910px" width="26" height="24"><path d="M1,1 L18.7,1 L13,9 L13,15 L9.5,17 L7,14 L7,9 Z" fill="#c6c9ce"/><path d="M12.5,10.5 L22.5,20.5 M22.5,10.5 L12.5,20.5" stroke="#8a8d94" stroke-width="3.2"/></svg>
<div style="position:absolute;left:562px;top:908px;width:1px;height:21px;background:#5a5e66"></div>
<div style="position:absolute;left:1337px;top:908px;width:1px;height:21px;background:#5a5e66"></div>
<div class="sel" style="left:577px;top:908px;width:125px;height:21px"></div>
<div style="position:absolute;left:582.5px;top:913.30px;font-size:12.5px;line-height:12.5px;height:12.5px;color:#1a1a1a;font-weight:400;white-space:nowrap;">Any Process</div>
<svg style="position:absolute;left:687.5px;top:913.5px" width="11" height="8"><path d="M1,1.5 L5.2,5.8 L9.4,1.5" fill="none" stroke="#111" stroke-width="2"/></svg>
<div style="position:absolute;left:717.6px;top:912.76px;font-size:13.3px;line-height:13.3px;height:13.3px;color:#6c7079;font-weight:400;white-space:nowrap;">Thread</div>
<div class="sel" style="left:768px;top:908px;width:126px;height:21px"></div>
<div style="position:absolute;left:773.5px;top:913.30px;font-size:12.5px;line-height:12.5px;height:12.5px;color:#1a1a1a;font-weight:400;white-space:nowrap;">Any Thread</div>
<svg style="position:absolute;left:879.5px;top:913.5px" width="11" height="8"><path d="M1,1.5 L5.2,5.8 L9.4,1.5" fill="none" stroke="#111" stroke-width="2"/></svg>
<div style="position:absolute;left:909.6px;top:912.76px;font-size:13.3px;line-height:13.3px;height:13.3px;color:#6c7079;font-weight:400;white-space:nowrap;">Module</div>
<div class="sel" style="left:964px;top:908px;width:210px;height:21px"></div>
<div style="position:absolute;left:969.5px;top:913.30px;font-size:12.5px;line-height:12.5px;height:12.5px;color:#1a1a1a;font-weight:400;white-space:nowrap;">Any Module</div>
<svg style="position:absolute;left:1159.5px;top:913.5px" width="11" height="8"><path d="M1,1.5 L5.2,5.8 L9.4,1.5" fill="none" stroke="#111" stroke-width="2"/></svg>
<div class="sel" style="left:1189px;top:908px;width:133px;height:21px"></div>
<div style="position:absolute;left:1194.5px;top:913.30px;font-size:12.5px;line-height:12.5px;height:12.5px;color:#1a1a1a;font-weight:400;white-space:nowrap;">Any Utilization</div>
<svg style="position:absolute;left:1307.5px;top:913.5px" width="11" height="8"><path d="M1,1.5 L5.2,5.8 L9.4,1.5" fill="none" stroke="#111" stroke-width="2"/></svg>
<div style="position:absolute;left:1352.5px;top:912.76px;font-size:13.3px;line-height:13.3px;height:13.3px;color:#6c7079;font-weight:400;white-space:nowrap;">Call Stack Mode</div>
<div class="sel" style="left:1458px;top:909px;width:89px;height:20px"></div>
<div style="position:absolute;left:1463.5px;top:912px;width:64px;height:16px;overflow:hidden;font-size:12.5px;line-height:14px;color:#1a1a1a;white-space:nowrap">User functions</div>
<svg style="position:absolute;left:1533px;top:913.5px" width="11" height="8"><path d="M1,1.5 L5.2,5.8 L9.4,1.5" fill="none" stroke="#111" stroke-width="2"/></svg>
<div class="sel" style="left:1561px;top:908px;width:161px;height:21px"></div>
<div style="position:absolute;left:1566.5px;top:913.30px;font-size:12.5px;line-height:12.5px;height:12.5px;color:#1a1a1a;font-weight:400;white-space:nowrap;">Functions only</div>
<svg style="position:absolute;left:1707.5px;top:913.5px" width="11" height="8"><path d="M1,1.5 L5.2,5.8 L9.4,1.5" fill="none" stroke="#111" stroke-width="2"/></svg>
<div style="position:absolute;left:1737.5px;top:912.76px;font-size:13.3px;line-height:13.3px;height:13.3px;color:#6c7079;font-weight:400;white-space:nowrap;">Inline Mode</div>
<div class="sel" style="left:1817px;top:908px;width:90px;height:21px"></div>
<div style="position:absolute;left:1822.5px;top:913.30px;font-size:12.5px;line-height:12.5px;height:12.5px;color:#1a1a1a;font-weight:400;white-space:nowrap;">Show inline</div>
<svg style="position:absolute;left:1892.5px;top:913.5px" width="11" height="8"><path d="M1,1.5 L5.2,5.8 L9.4,1.5" fill="none" stroke="#111" stroke-width="2"/></svg>
</body></html>
